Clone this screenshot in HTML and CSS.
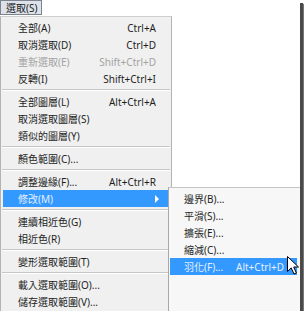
FILE: index.html
```html
<!DOCTYPE html>
<html lang="zh-Hant">

<head>
    <meta charset="UTF-8">
    <title>選取</title>
    <link rel="stylesheet" href="styles.css">
</head>

<body>
    <div class="frame">
        <div class="menubar">
            <span class="title">選取(S)</span>
        </div>
        <div class="menu">
            <div class="item"><span>全部(A)</span><span>Ctrl+A</span></div>
            <div class="item"><span>取消選取(D)</span><span>Ctrl+D</span></div>
            <div class="item off"><span>重新選取(E)</span><span>Shift+Ctrl+D</span></div>
            <div class="item"><span>反轉(I)</span><span>Shift+Ctrl+I</span></div>
            <div class="sep"></div>
            <div class="item"><span>全部圖層(L)</span><span>Alt+Ctrl+A</span></div>
            <div class="item"><span>取消選取圖層(S)</span></div>
            <div class="item"><span>類似的圖層(Y)</span></div>
            <div class="sep"></div>
            <div class="item"><span>顏色範圍(C)...</span></div>
            <div class="sep"></div>
            <div class="item"><span>調整邊緣(F)...</span><span>Alt+Ctrl+R</span></div>
            <div class="item hi"><span>修改(M)</span><span class="arrow"></span></div>
            <div class="sep"></div>
            <div class="item"><span>連續相近色(G)</span></div>
            <div class="item"><span>相近色(R)</span></div>
            <div class="sep"></div>
            <div class="item"><span>變形選取範圍(T)</span></div>
            <div class="sep"></div>
            <div class="item"><span>載入選取範圍(O)...</span></div>
            <div class="item"><span>儲存選取範圍(V)...</span></div>
        </div>

        <!-- 子選單 -->
        <div class="submenu">
            <div class="item"><span>邊界(B)...</span></div>
            <div class="item"><span>平滑(S)...</span></div>
            <div class="item"><span>擴張(E)...</span></div>
            <div class="item"><span>縮減(C)...</span></div>
            <div class="item hi"><span>羽化(F)...</span><span>Alt+Ctrl+D</span></div>
        </div>

        <svg class="cursor" width="13" height="19" viewBox="0 0 13 19">
            <path d="M0.5 0.5 L0.5 15.5 L4.2 11.9 L7 18 L9.4 17 L6.7 11 L11.5 11 Z" fill="#fff" stroke="#000" stroke-width="1" stroke-linejoin="round" />
        </svg>
    </div>
</body>

</html>
```

FILE: styles.css
```css
* {
    margin: 0;
    padding: 0;
    box-sizing: border-box;
}

body {
    background: #fff;
    font-family: "Noto Sans", "Noto Sans CJK TC", sans-serif;
    font-size: 10px;
    color: #1e1e1e;
}

.frame {
    position: relative;
    width: 300px;
    height: 311px;
    overflow: hidden;
    background: #fff;
    box-shadow: 3px 3px 0 #4a4a4a, 4px 4px 1px #777;
}

.menubar {
    display: flex;
    height: 16px;
}

.title {
    display: flex;
    align-items: center;
    width: 42px;
    height: 15px;
    padding-left: 5px;
    background: #dde2ea;
    border: 1px solid #7d838c;
    color: #1a1a1a;
}

.menu {
    width: 172px;
    padding: 2px 0 4px;
    background: #f0f0f0;
    border: 1px solid #b4b4b4;
    border-top-color: #cfcfcf;
}

.item {
    display: flex;
    justify-content: space-between;
    align-items: center;
    height: 17px;
    margin: 0 2px;
    padding: 0 13px 0 15px;
    white-space: nowrap;
}

.off {
    color: #a3a3a3;
}

.hi {
    background: #3399ff;
    color: #e4efff;
}

.sep {
    height: 1px;
    margin: 2px 1px 2px;
    background: #c6c6c6;
    border-bottom: 1px solid #fff;
    box-sizing: content-box;
}

.arrow {
    width: 0;
    height: 0;
    margin-right: -3px;
    border-left: 4px solid #fff;
    border-top: 4px solid transparent;
    border-bottom: 4px solid transparent;
}

.submenu {
    position: absolute;
    left: 168px;
    top: 187px;
    width: 132px;
    height: 130px;
    padding-top: 2px;
    background: #f7f7f7;
    border-left: 1px solid #a8a8a8;
    border-top: 1px solid #c4c4c4;
}

.submenu .item {
    margin: 0 3px 0 1px;
    padding: 0 13px 0 14px;
}

.cursor {
    position: absolute;
    left: 287px;
    top: 256px;
}
```
